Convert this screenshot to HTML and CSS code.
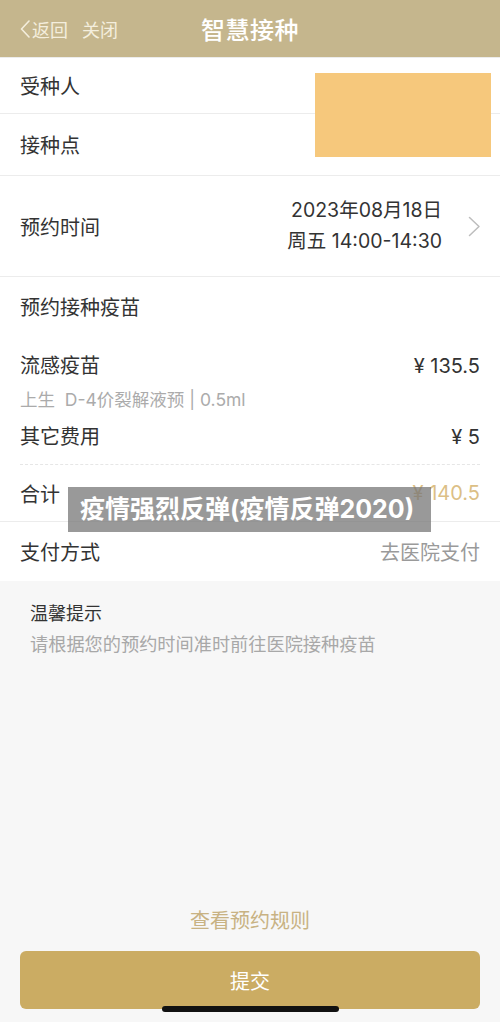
FILE: index.html
```html
<!DOCTYPE html>
<html lang="zh-CN">
<head>
<meta charset="utf-8">
<title>智慧接种</title>
<link rel="stylesheet" href="styles.css">
</head>
<body>
<div class="page">
  <header class="nav">
    <div class="nav-left">
      <span class="back">
        <svg class="back-icon" width="10" height="18" viewBox="0 0 10 18"><polyline points="9,1 1.5,9 9,17" fill="none" stroke="#f4eedd" stroke-width="1.6" stroke-linecap="round" stroke-linejoin="round"/></svg>
        返回
      </span>
      <span class="close">关闭</span>
    </div>
    <div class="nav-title">智慧接种</div>
  </header>

  <div class="info">
    <div class="row row-a"><span class="label">受种人</span></div>
    <div class="row row-b"><span class="label">接种点</span></div>
    <div class="redact"></div>
  </div>

  <div class="row row-time">
    <span class="label">预约时间</span>
    <div class="time-right">
      <div class="time-text">
        <div>2023年08月18日</div>
        <div>周五 14:00-14:30</div>
      </div>
      <svg class="chev" width="13" height="21" viewBox="0 0 13 21"><polyline points="1.5,1.5 11,10.5 1.5,19.5" fill="none" stroke="#bdbdbd" stroke-width="1.5" stroke-linecap="round" stroke-linejoin="round"/></svg>
    </div>
  </div>

  <section class="vaccine">
    <div class="sec-title">预约接种疫苗</div>
    <div class="item">
      <span class="label">流感疫苗</span>
      <span class="price">¥ 135.5</span>
    </div>
    <div class="sub">上生&nbsp; D-4价裂解液预 | 0.5ml</div>
    <div class="item item-other">
      <span class="label">其它费用</span>
      <span class="price">¥ 5</span>
    </div>
  </section>

  <div class="row row-total">
    <span class="label">合计</span>
    <span class="total">¥ 140.5</span>
    <div class="watermark">疫情强烈反弹(疫情反弹2020)</div>
  </div>

  <div class="row row-pay">
    <span class="label">支付方式</span>
    <span class="pay">去医院支付</span>
  </div>

  <section class="bottom">
    <div class="tip">
      <div class="tip-title">温馨提示</div>
      <div class="tip-text">请根据您的预约时间准时前往医院接种疫苗</div>
    </div>
    <div class="footer">
      <div class="rules">查看预约规则</div>
      <button class="submit">提交</button>
      <div class="home-bar"></div>
    </div>
  </section>
</div>
</body>
</html>
```

FILE: styles.css
```css
* { box-sizing: border-box; }
html, body { margin: 0; padding: 0; }
body {
  font-family: "Inter", "Noto Sans CJK SC", sans-serif;
  color: #333;
  background: #fff;
}
.page {
  width: 500px;
  height: 1022px;
  display: flex;
  flex-direction: column;
  overflow: hidden;
  position: relative;
}
.nav {
  height: 57px;
  background: #c5b68d;
  position: relative;
  display: flex;
  align-items: center;
  justify-content: center;
  flex-shrink: 0;
}
.nav-left {
  position: absolute;
  left: 20px;
  top: 0;
  height: 57px;
  display: flex;
  align-items: center;
  gap: 14px;
  color: #f4eedd;
  font-size: 18px;
}
.back { display: flex; align-items: center; gap: 2px; }
.back-icon { display: block; }
.nav-title {
  color: #fff;
  font-size: 24px;
  font-weight: 500;
  letter-spacing: 0.5px;
}
.info { position: relative; }
.row {
  display: flex;
  align-items: center;
  justify-content: space-between;
  padding: 0 20px;
  border-bottom: 1px solid #ececec;
  font-size: 20px;
  flex-shrink: 0;
}
.row-a { height: 57px; border-top: 1px solid #ececec; }
.row-b { height: 62px; }
.redact {
  position: absolute;
  left: 315px;
  top: 16px;
  width: 176px;
  height: 84px;
  background: #f6c87c;
}
.row-time { height: 101px; }
.time-right { display: flex; align-items: center; gap: 26px; }
.time-text { text-align: right; line-height: 31px; font-size: 19.5px; }
.chev { display: block; margin-right: -1px; }
.vaccine { padding: 16px 20px 0; flex-shrink: 0; }
.sec-title { font-size: 20px; line-height: 30px; }
.item {
  display: flex;
  justify-content: space-between;
  font-size: 20px;
  line-height: 30px;
  margin-top: 28px;
}
.item-other {
  margin-top: 10px;
  padding-bottom: 12px;
  border-bottom: 1px dashed #e6e6e6;
}
.price { color: #333; }
.sub {
  font-size: 17.5px;
  line-height: 24px;
  margin-top: 7px;
  color: #ababab;
}
.row-total { height: 57px; position: relative; }
.total { color: #dcbf86; }
.watermark {
  position: absolute;
  left: 68px;
  top: 22px;
  width: 363px;
  height: 45px;
  background: rgba(118, 118, 118, 0.74);
  color: #fff;
  font-size: 25px;
  font-weight: 700;
  line-height: 45px;
  padding-left: 12px;
  white-space: nowrap;
}
.row-pay { height: 59px; border-bottom: none; }
.pay { color: #9a9a9a; }
.bottom {
  flex: 1;
  background: #f7f7f7;
  display: flex;
  flex-direction: column;
  padding: 18px 20px 13px;
}
.tip { padding-left: 10px; }
.tip-title { font-size: 18px; line-height: 30px; color: #333; }
.tip-text { font-size: 18.2px; line-height: 30px; color: #a8a8a8; }
.footer {
  margin-top: auto;
  display: flex;
  flex-direction: column;
  align-items: center;
  position: relative;
}
.rules {
  font-size: 20px;
  line-height: 30px;
  color: #c8b283;
  margin-bottom: 15px;
}
.submit {
  width: 460px;
  height: 58px;
  border: none;
  border-radius: 6px;
  background: #cbac63;
  color: #fff;
  font-family: inherit;
  font-size: 20px;
}
.home-bar {
  position: absolute;
  left: 142px;
  bottom: -3px;
  width: 177px;
  height: 6px;
  border-radius: 3px;
  background: #111;
}
```
